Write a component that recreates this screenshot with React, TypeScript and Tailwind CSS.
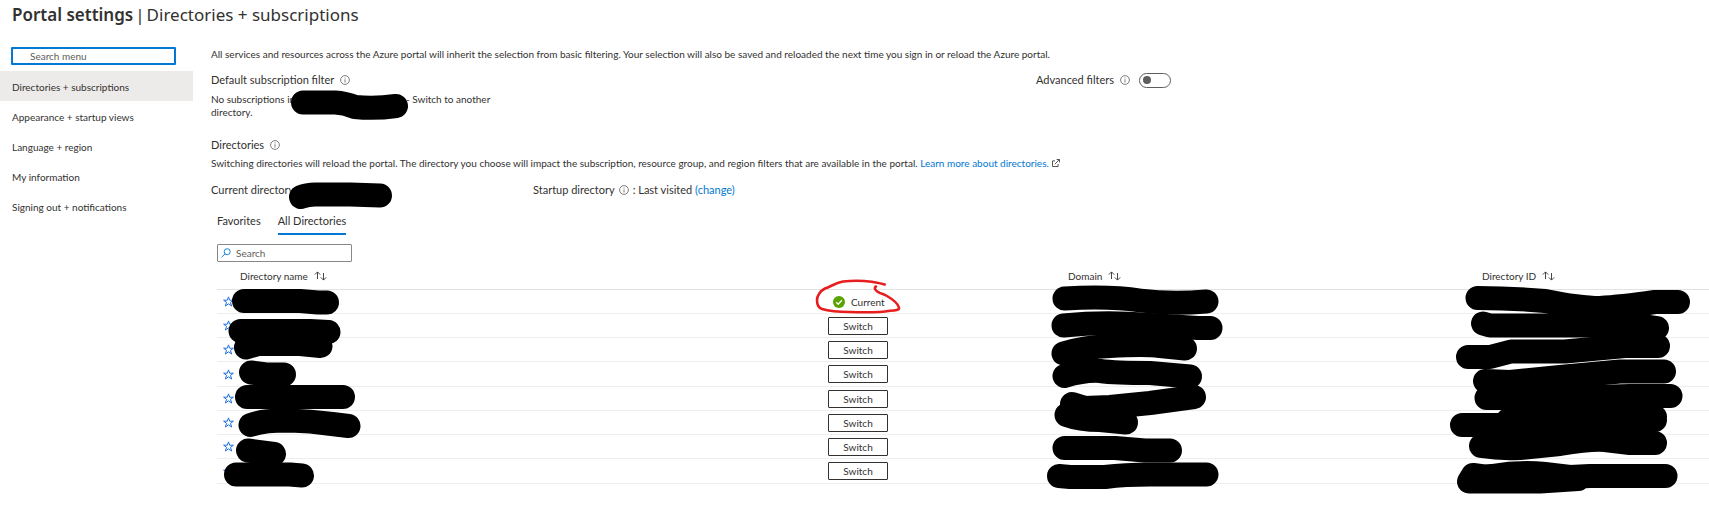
import { useState } from "react";

const navItems = [
  "Directories + subscriptions",
  "Appearance + startup views",
  "Language + region",
  "My information",
  "Signing out + notifications",
];

const rows = [true, false, false, false, false, false, false, false];

const nameMarks = [
  "M244 301H300L318 302.5H327",
  "M240.5 331H310L328.5 332",
  "M246 347.5L258 344H300L320.5 346",
  "M251 372.5L266 374.5H284",
  "M247 397H343",
  "M250.5 425C262 421 272 420.500 290 420.500Q310 421 332 424L348.500 426",
  "M248 450.5L274 454",
  "M236 474.5H290L302 475.5",
];

const domainMarks = [
  "M1064.5 298.5Q1110 296 1140 300.500Q1170 304.500 1206.5 301.5",
  "M1063.5 325.5Q1105 321.500 1150 325L1198 328H1210.5",
  "M1063.5 353.5Q1085 347 1110 346Q1145 344 1160 346L1185 348.5",
  "M1064.5 376Q1085 370 1100 371Q1115 373 1150 373L1190 376.5",
  "M1072 404L1085 408L1110 407L1150 403L1194 397",
  "M1066.500 415Q1080 420 1100 420L1126 422.5",
  "M1064.5 448H1115L1145 450.5H1170",
  "M1059 476L1070 477H1105Q1125 474.5 1150 474.5H1206.5",
];

const idMarks = [
  "M1477.5 298Q1510 298 1545 301Q1580 308 1600 308Q1620 307 1655 302H1678",
  "M1483 323.5L1490 325.500H1640L1657 328",
  "M1468 357H1490L1511 351.5H1565L1625 346H1658",
  "M1485 381L1510 382L1560 377L1620 371.500H1664",
  "M1486.5 398H1560L1630 396H1670.5",
  "M1462 425H1560L1655 417M1508 420H1655",
  "M1481 446Q1500 449 1520 448L1560 444Q1590 439 1605 440L1630 443H1655",
  "M1473 475L1469 481.500H1540L1578 479M1473 475L1484 476.500L1492 476Q1520 471.500 1545 474L1570 477L1590 476H1665.5",
];

type MarkerProps = {
  origin: string;
  paths: string[];
  color?: string;
  width?: number;
};

function Marker({ origin, paths, color = "#000", width = 24 }: MarkerProps) {
  return (
    <svg
      aria-hidden="true"
      className="pointer-events-none absolute left-0 top-0 z-10 h-px w-px overflow-visible"
      viewBox={`${origin} 1 1`}
      fill="none"
      stroke={color}
      strokeWidth={width}
      strokeLinecap="round"
      strokeLinejoin="round"
    >
      {paths.map((d) => (
        <path key={d} d={d} />
      ))}
    </svg>
  );
}

function Info() {
  return (
    <svg className="h-[10px] w-[10px] shrink-0" viewBox="0 0 10 10" fill="none" stroke="#605e5c" strokeWidth="0.8">
      <circle cx="5" cy="5" r="4.4" />
      <path d="M5 4.300V7.500M5 2.500V3.400" />
    </svg>
  );
}

function SortIcon() {
  return (
    <svg className="h-[10px] w-[13px] shrink-0" viewBox="0 0 13 10" fill="none" stroke="#484644" strokeWidth="1">
      <path d="M3.500 8V1M0.800 3.600L3.500 0.900L6.200 3.600M9.500 2V9M6.800 6.400L9.500 9.100L12.200 6.400" />
    </svg>
  );
}

function Star() {
  return (
    <svg className="h-[11px] w-[11px]" viewBox="0 0 11 11" fill="none" stroke="#1f6fde" strokeWidth="1">
      <path d="M5.500 0.900L6.700 4.200H10.400L7.500 6.300L8.600 10L5.500 7.800L2.400 10L3.500 6.300L0.600 4.200H4.300Z" />
    </svg>
  );
}

function SortHeader({ label }: { label: string }) {
  return (
    <button type="button" className="flex items-center gap-[6px]">
      {label}
      <SortIcon />
    </button>
  );
}

export default function App() {
  const [advanced, setAdvanced] = useState(false);
  const th = "relative h-7 border-b border-[#e4e2e0] p-0 text-left font-normal";
  return (
    <div className="min-h-screen bg-white font-[Lato,sans-serif] text-[10px] leading-4 text-[#323130]">
      <h1 className="flex h-[30px] items-center gap-[2px] pl-3 font-['Noto_Sans',sans-serif] text-[17px] leading-6">
        <span className="font-semibold">Portal settings</span>
        <span>|</span>
        <span>Directories + subscriptions</span>
      </h1>
      <div className="flex">
        <aside className="w-[193px] shrink-0 pt-[17px]">
          <input
            type="search"
            aria-label="Search menu"
            placeholder="Search menu"
            className="ml-[11px] block h-[18px] w-[165px] rounded-[1px] border-2 border-[#0078d4] pl-[17px] outline-none placeholder:text-[#605e5c]"
          />
          <nav className="mt-[6px]">
            {navItems.map((item, i) => (
              <a
                key={item}
                href="#"
                className={`flex h-[30px] items-center pl-3 pt-[2px] ${i === 0 ? "bg-[#edebe9]" : ""}`}
              >
                {item}
              </a>
            ))}
          </nav>
        </aside>

        <main className="min-w-0 flex-1 pl-[18px] pt-4">
          <p>
            All services and resources across the Azure portal will inherit the selection from basic filtering. Your
            selection will also be saved and reloaded the next time you sign in or reload the Azure portal.
          </p>

          <div className="mt-[10px] flex items-center text-[11px]">
            <div className="flex w-[825px] items-center gap-[6px]">
              <h2>Default subscription filter</h2>
              <Info />
            </div>
            <div className="flex items-center gap-[6px]">
              <span id="advanced-label">Advanced filters</span>
              <Info />
              <button
                type="button"
                role="switch"
                aria-checked={advanced}
                aria-labelledby="advanced-label"
                onClick={() => setAdvanced(!advanced)}
                className={`ml-[3px] flex h-[15px] w-8 items-center rounded-full border border-[#605e5c] px-[3px] ${advanced ? "justify-end" : ""}`}
              >
                <span className="h-2 w-2 rounded-full bg-[#605e5c]" />
              </button>
            </div>
          </div>

          <div className="relative mt-[5px] leading-[13px]">
            <p className="flex">
              <span className="w-[195px]">No subscriptions in</span>
              <span>- Switch to another</span>
            </p>
            <p>directory.</p>
            <Marker origin="211 93" paths={["M303 102.5H335Q345 103 355 107Q375 109 396 106"]} />
          </div>

          <h2 className="mt-[18px] flex items-center gap-[6px] text-[11px]">
            Directories <Info />
          </h2>
          <p className="mt-[2px] flex items-center gap-[3px]">
            <span>
              Switching directories will reload the portal. The directory you choose will impact the subscription,
              resource group, and region filters that are available in the portal.{" "}
              <a href="#" className="text-[#0078d4]">
                Learn more about directories.
              </a>
            </span>
            <svg className="h-2 w-2" viewBox="0 0 8 8" fill="none" stroke="#484644" strokeWidth="0.9">
              <path d="M3 1.900H0.500V7.500H6.100V5M2.800 5.200L7.400 0.600M4.600 0.500H7.500V3.400" />
            </svg>
          </p>

          <div className="mt-[11px] flex text-[11px]">
            <div className="relative w-[322px]">
              Current directory
              <Marker origin="211 182" paths={["M301 197Q308 194 318 194.500H350L380 195.5"]} />
            </div>
            <div className="flex items-center gap-1">
              Startup directory <Info />
              <span>
                : Last visited{" "}
                <a href="#" className="text-[#0078d4]">
                  (change)
                </a>
              </span>
            </div>
          </div>

          <div className="pl-[6px]">
            <div role="tablist" className="mt-[15px] flex gap-[17px] text-[11px]">
              <button type="button" role="tab" aria-selected="false" className="border-b-2 border-transparent pb-1">
                Favorites
              </button>
              <button type="button" role="tab" aria-selected="true" className="border-b-2 border-[#0078d4] pb-1">
                All Directories
              </button>
            </div>

            <div className="mt-[9px] flex h-[18px] w-[135px] items-center gap-[5px] rounded-[1px] border border-[#8a8886] pl-[3px]">
              <svg className="h-[10px] w-[10px] shrink-0" viewBox="0 0 10 10" fill="none" stroke="#0078d4" strokeWidth="0.9">
                <circle cx="6.200" cy="3.700" r="3" />
                <path d="M4 5.900L0.500 9.400" />
              </svg>
              <input
                type="search"
                aria-label="Search directories"
                placeholder="Search"
                className="h-4 min-w-0 flex-1 outline-none placeholder:text-[#605e5c]"
              />
            </div>

            <table className="w-full table-fixed border-separate border-spacing-0">
              <thead>
                <tr>
                  <th className={`${th} pl-[23px]`}>
                    <SortHeader label="Directory name" />
                    <Marker origin="217 262" paths={nameMarks} />
                  </th>
                  <th className={`${th} w-[240px]`} aria-label="Status">
                    <Marker
                      origin="828 262"
                      color="#e81e1e"
                      width={2.6}
                      paths={[
                        "M884.7 284.500C880 283 876 282.500 871.700 281.700C862 280.500 852 280.500 843 281.500C835 283 831 286.500 825 288.500C820 291 817 296 817 300C817 305 819 308 822 309C830 311.500 840 312 850 312C865 312.500 880 312.500 890 310.700C895 310.500 900 310 899 307.500C898 304 893 299.500 887 296C884 294 877 293 875.300 289.500C874.500 288 875 287 876 286.500",
                      ]}
                    />
                  </th>
                  <th className={`${th} w-[414px]`}>
                    <SortHeader label="Domain" />
                    <Marker origin="1068 262" paths={domainMarks} />
                  </th>
                  <th className={`${th} w-[227px]`}>
                    <SortHeader label="Directory ID" />
                    <Marker origin="1482 262" paths={idMarks} />
                  </th>
                </tr>
              </thead>
              <tbody>
                {rows.map((current, i) => {
                  const td = `${i % 4 === 3 ? "h-[25px]" : "h-6"} border-b border-[#f0eeed] p-0`;
                  return (
                    <tr key={i}>
                      <td className={`${td} pl-[6px]`}>
                        <button type="button" aria-label="Add to favorites" className="block">
                          <Star />
                        </button>
                      </td>
                      <td className={td}>
                        {current ? (
                          <span className="flex items-center gap-[6px] pl-[5px]">
                            <svg className="h-3 w-3" viewBox="0 0 12 12">
                              <circle cx="6" cy="6" r="6" fill="#57a300" />
                              <path d="M3.200 6.200L5.200 8.200L8.900 4.200" fill="none" stroke="#fff" strokeWidth="1.400" />
                            </svg>
                            Current
                          </span>
                        ) : (
                          <button
                            type="button"
                            className="flex h-[18px] w-[60px] items-center justify-center rounded-[1px] border border-[#323130]"
                          >
                            Switch
                          </button>
                        )}
                      </td>
                      <td className={td} />
                      <td className={td} />
                    </tr>
                  );
                })}
              </tbody>
            </table>
          </div>
        </main>
      </div>
    </div>
  );
}
